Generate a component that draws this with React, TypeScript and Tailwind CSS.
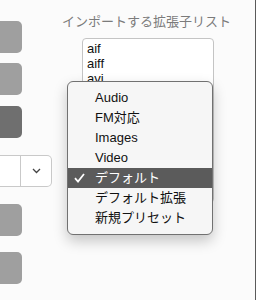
import React from 'react';

const menuItems = ['Audio', 'FM対応', 'Images', 'Video', 'デフォルト', 'デフォルト拡張', '新規プリセット'];
const selected = 'デフォルト';

const SideButton = ({ dark = false, className = '' }: { dark?: boolean; className?: string }) => (
    <div className={`h-[32px] w-[22px] rounded-r-[5px] ${dark ? 'bg-[#6f6f6f]' : 'bg-[#9f9f9f]'} ${className}`} />
);

export default function App() {
    return (
        <div
            className="relative flex h-[300px] w-[257px] overflow-hidden bg-[#fbfbfb] text-[13px]"
            style={{ fontFamily: '"Liberation Sans", "Noto Sans CJK JP", sans-serif' }}
        >
            {/* left strip of buttons */}
            <div className="flex w-[52px] shrink-0 flex-col pt-[21px]">
                <SideButton />
                <SideButton className="mt-[10px]" />
                <SideButton dark className="mt-[11px]" />
                <div className="mt-[17px] flex h-[32px] w-[52px] rounded-r-[5px] border border-l-0 border-[#c9c9c9] bg-white">
                    <div className="w-[21px] border-r border-[#c9c9c9]" />
                    <div className="flex flex-1 items-center justify-center">
                        <svg width="9" height="6" viewBox="0 0 9 6" fill="none">
                            <path d="M1 1l3.5 3.5L8 1" stroke="#444" strokeWidth="1.3" />
                        </svg>
                    </div>
                </div>
                <SideButton className="mt-[17px]" />
                <SideButton className="mt-[16px]" />
            </div>

            {/* main panel */}
            <div className="flex flex-1 flex-col pl-[10px] pt-[14px]">
                <div className="leading-[16px] text-[#7b7b7b]">インポートする拡張子リスト</div>
                <div className="ml-[20px] mt-[8px] h-[165px] w-[132px] overflow-hidden rounded-[4px] border border-[#c4c4c4] bg-white px-[4px] pt-[2px] leading-[15px] text-[#111]">
                    <div>aif</div>
                    <div>aiff</div>
                    <div>avi</div>
                </div>
            </div>

            <div className="w-[1px] shrink-0 bg-[#5a5a5a]" />
            <div className="w-[1px] shrink-0 bg-white" />

            {/* popup menu */}
            <div className="absolute left-[67px] top-[81px] w-[146px] rounded-[6px] border border-[#717171] bg-[#f6f6f6] py-[6px] shadow-[0_6px_14px_rgba(0,0,0,0.22)]">
                {menuItems.map(item => {
                    const active = item === selected;
                    return (
                        <div
                            key={item}
                            className={`relative flex h-[20px] items-center pl-[27px] ${active ? 'bg-[#5b5b5b] text-white' : 'text-[#111]'}`}
                        >
                            {active && (
                                <svg className="absolute left-[6px] top-[5px]" width="11" height="10" viewBox="0 0 11 10" fill="none">
                                    <path d="M1 5.2l3 3.3L10 1" stroke="white" strokeWidth="1.8" />
                                </svg>
                            )}
                            {item}
                        </div>
                    );
                })}
            </div>
        </div>
    );
}
